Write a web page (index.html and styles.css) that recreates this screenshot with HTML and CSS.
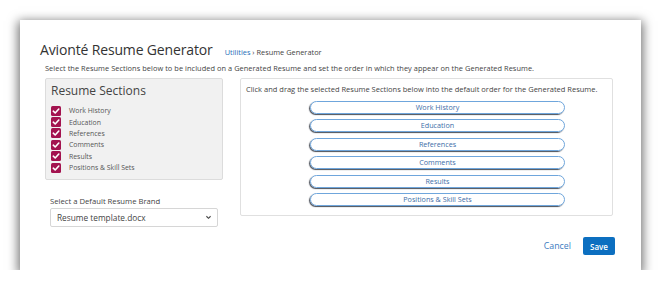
FILE: index.html
```html
<!DOCTYPE html>
<html>
<head>
<meta charset="utf-8">
<link rel="stylesheet" href="styles.css">
</head>
<body>
<div class="card">
  <div class="header">
    <h1 class="title">Avionté Resume Generator</h1>
    <div class="crumbs"><a class="crumb-link">Utilities</a> › Resume Generator</div>
  </div>
  <p class="desc">Select the Resume Sections below to be included on a Generated Resume and set the order in which they appear on the Generated Resume.</p>
  <div class="main">
    <div class="left">
      <div class="sections">
        <h2 class="sections-title">Resume Sections</h2>
        <ul class="checks">
          <li class="check"><span class="box"><svg viewBox="0 0 10 10"><path d="M2.3 5.2 L4.2 7 L7.8 3" fill="none" stroke="#fff" stroke-width="1.6" stroke-linecap="round" stroke-linejoin="round"/></svg></span>Work History</li>
          <li class="check"><span class="box"><svg viewBox="0 0 10 10"><path d="M2.3 5.2 L4.2 7 L7.8 3" fill="none" stroke="#fff" stroke-width="1.6" stroke-linecap="round" stroke-linejoin="round"/></svg></span>Education</li>
          <li class="check"><span class="box"><svg viewBox="0 0 10 10"><path d="M2.3 5.2 L4.2 7 L7.8 3" fill="none" stroke="#fff" stroke-width="1.6" stroke-linecap="round" stroke-linejoin="round"/></svg></span>References</li>
          <li class="check"><span class="box"><svg viewBox="0 0 10 10"><path d="M2.3 5.2 L4.2 7 L7.8 3" fill="none" stroke="#fff" stroke-width="1.6" stroke-linecap="round" stroke-linejoin="round"/></svg></span>Comments</li>
          <li class="check"><span class="box"><svg viewBox="0 0 10 10"><path d="M2.3 5.2 L4.2 7 L7.8 3" fill="none" stroke="#fff" stroke-width="1.6" stroke-linecap="round" stroke-linejoin="round"/></svg></span>Results</li>
          <li class="check"><span class="box"><svg viewBox="0 0 10 10"><path d="M2.3 5.2 L4.2 7 L7.8 3" fill="none" stroke="#fff" stroke-width="1.6" stroke-linecap="round" stroke-linejoin="round"/></svg></span>Positions &amp; Skill Sets</li>
        </ul>
      </div>
      <div class="brand">
        <div class="brand-label">Select a Default Resume Brand</div>
        <div class="select">
          <span>Resume template.docx</span>
          <svg class="chev" viewBox="0 0 8 6"><path d="M1.5 1.5 L4 4 L6.5 1.5" fill="none" stroke="#444" stroke-width="1.3"/></svg>
        </div>
      </div>
    </div>
    <div class="right">
      <p class="hint">Click and drag the selected Resume Sections below into the default order for the Generated Resume.</p>
      <div class="pills">
        <div class="pill">Work History</div>
        <div class="pill">Education</div>
        <div class="pill">References</div>
        <div class="pill">Comments</div>
        <div class="pill">Results</div>
        <div class="pill">Positions &amp; Skill Sets</div>
      </div>
    </div>
  </div>
  <div class="footer">
    <span class="cancel">Cancel</span>
    <span class="save">Save</span>
  </div>
</div>
</body>
</html>
```
FILE: styles.css
```css
html, body {
  margin: 0;
  padding: 0;
  background: #fff;
}
body {
  font-family: "Open Sans", "Noto Sans", sans-serif;
  color: #444;
}
.card {
  margin: 20px 0 0 20px;
  width: 621px;
  height: 250px;
  box-sizing: border-box;
  background: #fff;
  box-shadow: 0 3px 10px 2px rgba(0, 0, 0, 0.55);
  padding: 20px 26px 0 20px;
  display: flex;
  flex-direction: column;
}
.header {
  display: flex;
  align-items: baseline;
  gap: 12px;
  height: 19px;
}
.title {
  margin: 0;
  font-size: 14px;
  font-weight: 400;
  color: #333;
  letter-spacing: -0.15px;
  line-height: 19px;
}
.crumbs {
  font-size: 7.4px;
  color: #444;
}
.crumb-link {
  color: #1f6fb8;
}
.desc {
  margin: 4px 0 0 5px;
  font-size: 7.4px;
  line-height: 11px;
  color: #444;
  letter-spacing: 0.05px;
}
.main {
  display: flex;
  margin: 4px 0 0 5px;
  gap: 17px;
  align-items: flex-start;
}
.left {
  width: 178px;
  display: flex;
  flex-direction: column;
}
.sections {
  height: 102px;
  box-sizing: border-box;
  background: #f1f1f1;
  border: 1px solid #dcdcdc;
  border-radius: 2px;
  padding: 4px 5px 0 5px;
}
.sections-title {
  margin: 0;
  font-size: 12px;
  font-weight: 400;
  color: #444;
  line-height: 16px;
}
.checks {
  list-style: none;
  margin: 6px 0 0 0;
  padding: 0;
}
.check {
  display: flex;
  align-items: center;
  height: 11.4px;
  font-size: 6.9px;
  color: #555;
}
.box {
  width: 10px;
  height: 10px;
  background: #a3134f;
  border-radius: 1.5px;
  margin-right: 8px;
  display: flex;
}
.box svg {
  width: 10px;
  height: 10px;
}
.brand {
  margin: 16px 0 0 5px;
  width: 168px;
}
.brand-label {
  font-size: 7.7px;
  color: #444;
  line-height: 11px;
}
.select {
  margin-top: 1px;
  height: 19px;
  box-sizing: border-box;
  border: 1px solid #d6d6d6;
  border-radius: 2px;
  background: #fff;
  display: flex;
  align-items: center;
  justify-content: space-between;
  padding: 0 5px 0 6px;
  font-size: 8.3px;
  color: #444;
}
.chev {
  width: 7px;
  height: 5px;
}
.right {
  width: 373px;
  height: 138px;
  box-sizing: border-box;
  border: 1px solid #e0e0e0;
  border-radius: 2px;
  background: #fff;
  padding: 5px 0 0 5px;
}
.hint {
  margin: 0;
  font-size: 7.5px;
  line-height: 11px;
  color: #444;
}
.pills {
  display: flex;
  flex-direction: column;
  gap: 5.4px;
  margin: 6px 0 0 64px;
}
.pill {
  width: 255px;
  height: 13px;
  box-sizing: border-box;
  border: 1px solid #6fa6dc;
  border-radius: 7px;
  box-shadow: -1px 1px 1px #4a4f58;
  font-size: 7.2px;
  line-height: 11px;
  color: #3d6ea8;
  text-align: center;
}
.footer {
  display: flex;
  justify-content: flex-end;
  align-items: center;
  gap: 12px;
  margin-top: 10px;
}
.cancel {
  font-size: 8.8px;
  color: #3d7bbf;
}
.save {
  width: 32px;
  height: 18px;
  box-sizing: border-box;
  background: #0c6fc0;
  border-radius: 2px;
  color: #fff;
  font-size: 8px;
  font-weight: 600;
  display: flex;
  align-items: center;
  justify-content: center;
}
```
